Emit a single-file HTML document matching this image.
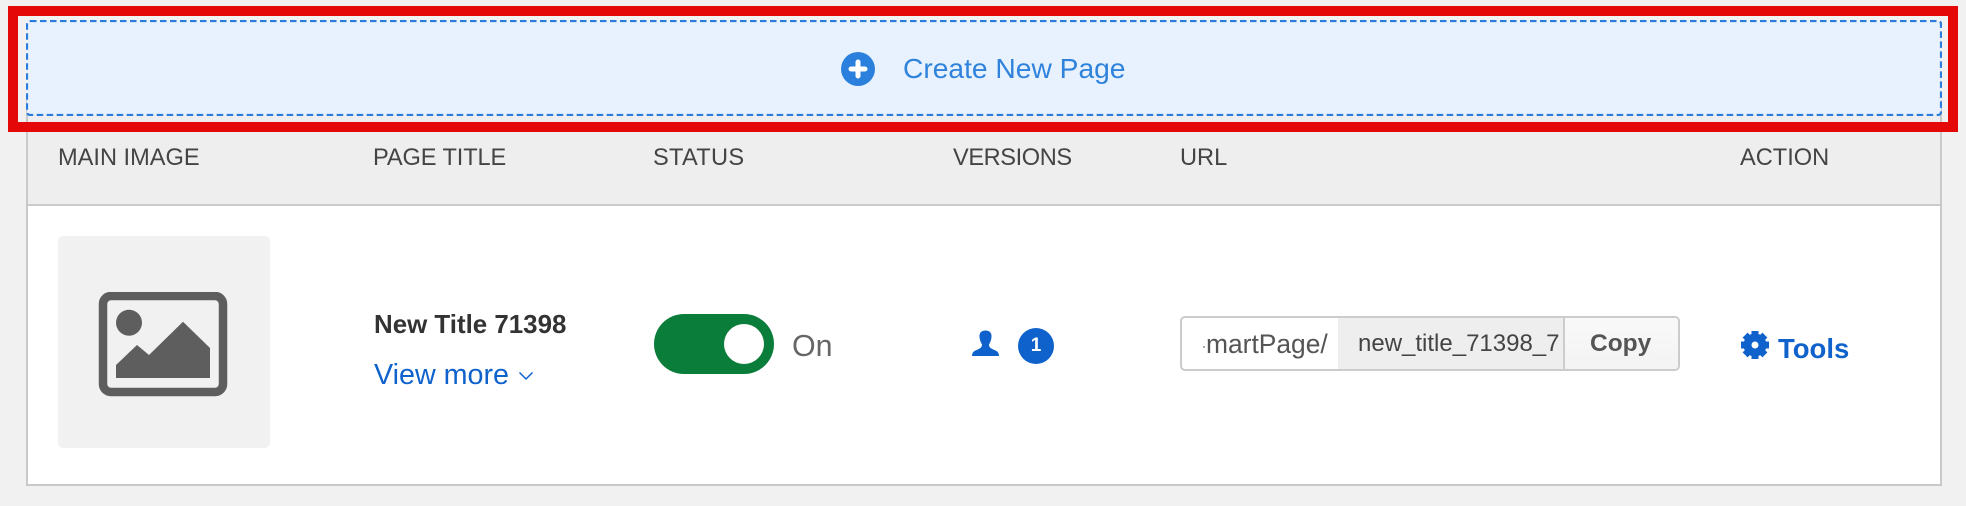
<!DOCTYPE html>
<html>
<head>
<meta charset="utf-8">
<style>
html,body{margin:0;padding:0;width:1966px;height:506px;overflow:hidden;background:#f1f1f1;font-family:"Liberation Sans",sans-serif}
.a{position:absolute;white-space:nowrap;line-height:1}
.h{font-size:23.6px;color:#444;top:147px}
</style>
</head>
<body>
<div class="a" style="left:26px;top:100px;width:1912px;height:382px;border:2px solid #c9c9c9;background:#fff"></div>
<div class="a" style="left:28px;top:102px;width:1912px;height:102px;background:#eee;border-bottom:2px solid #cbcbcb"></div>

<div class="a h" style="left:58px">MAIN IMAGE</div>
<div class="a h" style="left:373px;letter-spacing:-.1px">PAGE TITLE</div>
<div class="a h" style="left:653px;letter-spacing:.3px">STATUS</div>
<div class="a h" style="left:953px;letter-spacing:-.4px">VERSIONS</div>
<div class="a h" style="left:1180px">URL</div>
<div class="a h" style="left:1740px">ACTION</div>

<!-- Red highlight + create -->
<div class="a" style="left:18px;top:16px;width:1930px;height:4px;background:#f1f1f1"></div>
<div class="a" style="left:18px;top:16px;width:8px;height:106px;background:#f1f1f1"></div>
<div class="a" style="left:1942px;top:16px;width:6px;height:106px;background:#f1f1f1"></div>
<svg class="a" style="left:26px;top:20px" width="1916" height="96" viewBox="0 0 1916 96">
<rect x="1" y="1" width="1914" height="94" rx="3" fill="#e7f2fe" stroke="#2a7bdc" stroke-width="2.2" stroke-dasharray="6.5 3.5"/>
</svg>
<div class="a" style="left:8px;top:6px;width:1930px;height:106px;border:10px solid #e40808"></div>
<svg class="a" style="left:841px;top:52px" width="34" height="34" viewBox="0 0 34 34">
<circle cx="17" cy="17" r="17" fill="#2a80dc"/>
<path d="M17 10V24M10 17H24" stroke="#fff" stroke-width="5" stroke-linecap="round"/>
</svg>
<div class="a" style="left:903px;top:54px;font-size:28.2px;color:#2f83dc">Create New Page</div>

<!-- image tile -->
<div class="a" style="left:58px;top:236px;width:212px;height:212px;background:#f1f1f1;border-radius:5px"></div>
<svg class="a" style="left:98px;top:292px" width="130" height="105" viewBox="0 0 130 105">
<rect x="5" y="4" width="120" height="96" rx="8" fill="none" stroke="#5e5e5e" stroke-width="8.5"/>
<circle cx="31" cy="30.7" r="13" fill="#5e5e5e"/>
<path d="M18 73L39 53L51 63L85 29.7L112 56V86H18Z" fill="#5e5e5e"/>
</svg>

<!-- title -->
<div class="a" style="left:374px;top:313px;font-size:25.9px;font-weight:bold;color:#333">New Title 71398</div>
<div class="a" style="left:374px;top:361px;font-size:28.7px;color:#0f62cc">View more</div>
<svg class="a" style="left:518px;top:371px" width="16" height="10" viewBox="0 0 16 10">
<path d="M1.5 1.5L8 8L14.5 1.5" fill="none" stroke="#0f62cc" stroke-width="1.5"/>
</svg>

<!-- toggle -->
<div class="a" style="left:654px;top:314px;width:120px;height:60px;border-radius:30px;background:#0a7d3a"></div>
<div class="a" style="left:724px;top:324px;width:40px;height:40px;border-radius:50%;background:#fff"></div>
<div class="a" style="left:792px;top:331px;font-size:30.4px;color:#666">On</div>

<!-- versions -->
<svg class="a" style="left:971px;top:330px" width="29" height="27" viewBox="0 0 29 27">
<path d="M14.5 .5C18.8 .5 20.8 3 20.5 7C20.3 10 19.2 12.5 18 14.5C18 17.5 20 18.5 23.5 20C26.5 21.2 27.8 22.5 28 26H1C1.2 22.5 2.5 21.2 5.5 20C9 18.5 11 17.5 11 14.5C9.8 12.5 8.7 10 8.5 7C8.2 3 10.2 .5 14.5 .5Z" fill="#0f62cc"/>
</svg>
<div class="a" style="left:1018px;top:328px;width:36px;height:36px;border-radius:50%;background:#0f62cc;color:#fff;font-size:19px;font-weight:bold;line-height:36px;text-align:center">1</div>

<!-- url -->
<div class="a" style="left:1180px;top:316px;width:496px;height:51px;border:2px solid #ccc;border-radius:5px;background:#fff;overflow:hidden">
  <div class="a" style="left:156px;top:0;width:225px;height:51px;background:#eee"></div>
  <div class="a" style="left:381px;top:0;width:2px;height:51px;background:#ccc"></div>
  <div class="a" style="left:383px;top:0;width:113px;height:51px;background:linear-gradient(#f9f9f9,#f3f3f3)"></div>
</div>
<div class="a" style="left:1206px;top:331px;font-size:26.4px;color:#555">martPage/</div>
<div class="a" style="left:1203px;top:346px;width:2px;height:2px;background:#aaa"></div>
<div class="a" style="left:1358px;top:332px;font-size:24px;color:#444">new_title_71398_7</div>
<div class="a" style="left:1590px;top:332px;font-size:24.5px;font-weight:bold;color:#555">Copy</div>

<!-- tools -->
<svg class="a" style="left:1740px;top:330px" width="30" height="30" viewBox="0 0 30 30">
<circle cx="15" cy="15" r="7.5" fill="none" stroke="#0f62cc" stroke-width="8"/>
<path d="M15 1V7M15 23V29M1 15H7M23 15H29M5.1 5.1L9.3 9.3M20.7 20.7L24.9 24.9M5.1 24.9L9.3 20.7M20.7 9.3L24.9 5.1" stroke="#0f62cc" stroke-width="7"/>
</svg>
<div class="a" style="left:1778px;top:335px;font-size:27.5px;font-weight:bold;color:#0f62cc">Tools</div>
</body>
</html>
